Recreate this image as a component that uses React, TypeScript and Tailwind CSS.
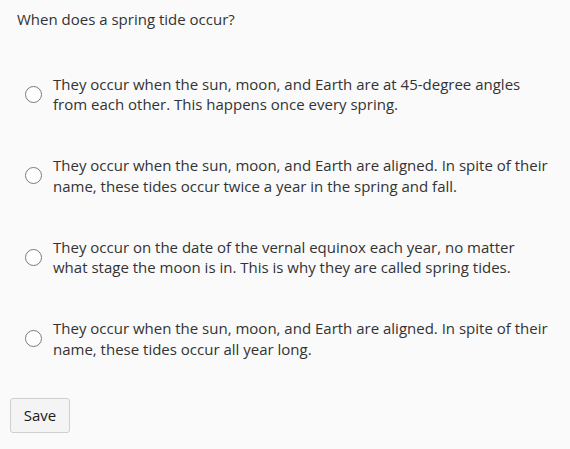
import React from "react";

const options: [string, string][] = [
  ["They occur when the sun, moon, and Earth are at 45-degree angles", "from each other. This happens once every spring."],
  ["They occur when the sun, moon, and Earth are aligned. In spite of their", "name, these tides occur twice a year in the spring and fall."],
  ["They occur on the date of the vernal equinox each year, no matter", "what stage the moon is in. This is why they are called spring tides."],
  ["They occur when the sun, moon, and Earth are aligned. In spite of their", "name, these tides occur all year long."],
];

export default function App() {
  return (
    <div
      className="w-[570px] h-[449px] bg-[#fafafa] text-[#333] text-[15px] leading-[20.5px] overflow-hidden"
      style={{ fontFamily: '"Open Sans", sans-serif' }}
    >
      <div className="pt-[9px] pl-[17px]">When does a spring tide occur?</div>
      <div className="flex flex-col gap-[40.5px] pt-[44px] pl-[25px]">
        {options.map((o, i) => (
          <label key={i} className="flex items-center gap-[11px]">
            <span className="w-[17px] h-[17px] shrink-0 rounded-full border-[1.5px] border-[#7a7a7a] bg-white" />
            <span className="whitespace-nowrap">
              {o[0]}
              <br />
              {o[1]}
            </span>
          </label>
        ))}
      </div>
      <div className="pt-[39px] pl-[10px]">
        <button className="w-[60px] h-[35px] rounded-[3px] border border-[#cfcfcf] bg-[#f4f4f4] text-[#1a1a1a] text-[15px]">
          Save
        </button>
      </div>
    </div>
  );
}
